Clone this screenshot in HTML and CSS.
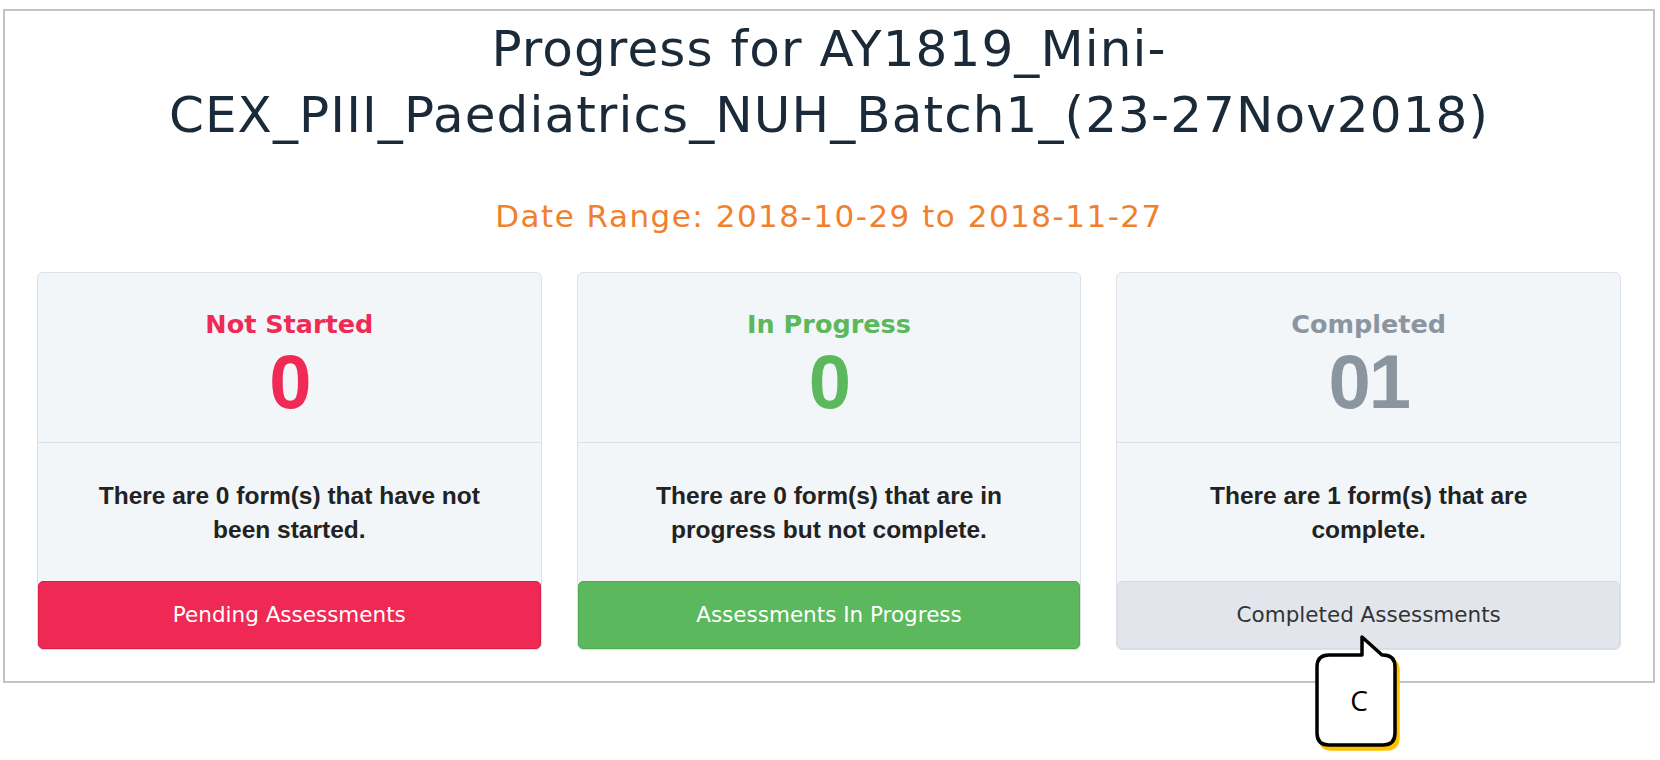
FILE: index.html
```html
<!DOCTYPE html>
<html lang="en">
<head>
<meta charset="utf-8">
<title>Progress</title>
<link rel="stylesheet" href="styles.css">
</head>
<body>
<div class="frame">
  <h1 class="title">Progress for AY1819_Mini-<br>CEX_PIII_Paediatrics_NUH_Batch1_(23-27Nov2018)</h1>
  <p class="range">Date Range: 2018-10-29 to 2018-11-27</p>
  <div class="cards">
    <div class="card">
      <div class="card-head">
        <h3 class="card-title red">Not Started</h3>
        <div class="count red">0</div>
      </div>
      <div class="card-body">There are 0 form(s) that have not<br>been started.</div>
      <div class="btn btn-red">Pending Assessments</div>
    </div>
    <div class="card">
      <div class="card-head">
        <h3 class="card-title green">In Progress</h3>
        <div class="count green">0</div>
      </div>
      <div class="card-body">There are 0 form(s) that are in<br>progress but not complete.</div>
      <div class="btn btn-green">Assessments In Progress</div>
    </div>
    <div class="card">
      <div class="card-head">
        <h3 class="card-title gray">Completed</h3>
        <div class="count gray">01</div>
      </div>
      <div class="card-body">There are 1 form(s) that are<br>complete.</div>
      <div class="btn btn-gray">Completed Assessments</div>
    </div>
  </div>
</div>
<div class="callout">
  <svg class="callout-svg" width="100" height="125" viewBox="0 0 100 125">
    <path class="callout-shadow" d="M 19 25 H 52 V 7 L 72 25 H 73 Q 85 25 85 37 V 103 Q 85 115 73 115 H 19 Q 7 115 7 103 V 37 Q 7 25 19 25 Z" transform="translate(3 4)"/>
    <path class="callout-body" d="M 19 25 H 52 V 7 L 72 25 H 73 Q 85 25 85 37 V 103 Q 85 115 73 115 H 19 Q 7 115 7 103 V 37 Q 7 25 19 25 Z"/>
  </svg>
  <span class="callout-text">C</span>
</div>
</body>
</html>
```

FILE: styles.css
```css
* { box-sizing: border-box; }

body {
  margin: 0;
  background: #ffffff;
  font-family: "DejaVu Sans", sans-serif;
  position: relative;
  width: 1660px;
  height: 760px;
  overflow: hidden;
}

.frame {
  margin: 9px 0 0 3px;
  width: 1652px;
  border: 2px solid #c3c3c3;
  padding: 5px 32px 31px 32px;
}

.title {
  margin: 0;
  text-align: center;
  font-weight: normal;
  font-size: 50px;
  line-height: 66px;
  letter-spacing: 1.1px;
  color: #1b2a38;
}

.range {
  margin: 50px 0 0 0;
  text-align: center;
  font-size: 31px;
  line-height: 36px;
  letter-spacing: 1.5px;
  color: #f1802e;
}

.cards {
  margin-top: 38px;
  display: grid;
  grid-template-columns: 1fr 1fr 1fr;
  gap: 35px;
}

.card {
  background: #f3f6f9;
  border: 1px solid #dce1e7;
  border-radius: 6px;
  display: flex;
  flex-direction: column;
}

.card-head {
  padding: 35px 0 20px;
  text-align: center;
  border-bottom: 1px solid #dce1e7;
}

.card-title {
  margin: 0;
  font-size: 25.5px;
  line-height: 32px;
  font-weight: bold;
}

.count {
  margin-top: 2px;
  font-family: "Liberation Sans", Arial, sans-serif;
  font-size: 76px;
  line-height: 80px;
  font-weight: bold;
  letter-spacing: -2px;
}

.red { color: #ee2a55; }
.green { color: #5cb85c; }
.gray { color: #8b959f; }

.card-body {
  padding: 36px 10px 34px;
  text-align: center;
  font-family: "Liberation Sans", Arial, sans-serif;
  font-size: 24.5px;
  line-height: 34px;
  font-weight: bold;
  color: #222222;
}

.btn {
  height: 68px;
  line-height: 66px;
  text-align: center;
  font-size: 21.5px;
  border-radius: 5px;
  border: 1px solid transparent;
}

.btn-red {
  background: #ef2953;
  border-color: #d91f47;
  color: #ffffff;
}

.btn-green {
  background: #5cb85c;
  border-color: #4cae4c;
  color: #ffffff;
}

.btn-gray {
  background: #e2e6ec;
  border-color: #d9dde3;
  color: #333333;
}

.callout {
  position: absolute;
  left: 1310px;
  top: 630px;
  width: 100px;
  height: 125px;
}

.callout-svg {
  position: absolute;
  left: 0;
  top: 0;
}

.callout-shadow {
  fill: #ffc000;
  stroke: #ffc000;
  stroke-width: 3.5;
  stroke-linejoin: round;
}

.callout-body {
  fill: #ffffff;
  stroke: #000000;
  stroke-width: 3.5;
  stroke-linejoin: round;
}

.callout-text {
  position: absolute;
  left: 10px;
  top: 25px;
  width: 78px;
  height: 90px;
  display: flex;
  align-items: center;
  justify-content: center;
  font-family: "Open Sans", "Liberation Sans", sans-serif;
  font-size: 28px;
  color: #000000;
}
```
